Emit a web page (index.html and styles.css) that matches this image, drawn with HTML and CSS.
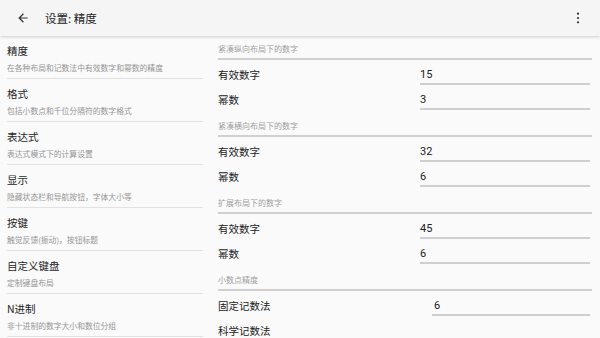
FILE: index.html
```html
<!DOCTYPE html>
<html lang="zh">
<head>
<meta charset="utf-8">
<link rel="stylesheet" href="styles.css">
</head>
<body>
<header class="appbar">
  <svg class="icon back" viewBox="0 0 24 24" width="14" height="14"><path d="M20 11H7.83l5.59-5.59L12 4l-8 8 8 8 1.41-1.41L7.83 13H20v-2z" fill="#333"/></svg>
  <h1 class="title">设置: 精度</h1>
  <svg class="icon more" viewBox="0 0 4 14" width="4" height="12"><circle cx="2" cy="2" r="1.3" fill="#333"/><circle cx="2" cy="7" r="1.3" fill="#333"/><circle cx="2" cy="12" r="1.3" fill="#333"/></svg>
</header>
<main class="content">
  <nav class="menu">
    <div class="item"><div class="item-title">精度</div><div class="item-sub">在各种布局和记数法中有效数字和幂数的精度</div></div>
    <div class="item"><div class="item-title">格式</div><div class="item-sub">包括小数点和千位分隔符的数字格式</div></div>
    <div class="item"><div class="item-title">表达式</div><div class="item-sub">表达式模式下的计算设置</div></div>
    <div class="item"><div class="item-title">显示</div><div class="item-sub">隐藏状态栏和导航按钮，字体大小等</div></div>
    <div class="item"><div class="item-title">按键</div><div class="item-sub">触觉反馈(振动)，按钮标题</div></div>
    <div class="item"><div class="item-title">自定义键盘</div><div class="item-sub">定制键盘布局</div></div>
    <div class="item"><div class="item-title">N进制</div><div class="item-sub">非十进制的数字大小和数位分组</div></div>
  </nav>
  <section class="detail">
    <div class="group">
      <div class="group-head">紧凑纵向布局下的数字</div>
      <div class="row"><span class="label">有效数字</span><span class="value">15</span></div>
      <div class="row"><span class="label">幂数</span><span class="value">3</span></div>
    </div>
    <div class="group">
      <div class="group-head">紧凑横向布局下的数字</div>
      <div class="row"><span class="label">有效数字</span><span class="value">32</span></div>
      <div class="row"><span class="label">幂数</span><span class="value">6</span></div>
    </div>
    <div class="group">
      <div class="group-head">扩展布局下的数字</div>
      <div class="row"><span class="label">有效数字</span><span class="value">45</span></div>
      <div class="row"><span class="label">幂数</span><span class="value">6</span></div>
    </div>
    <div class="group">
      <div class="group-head">小数点精度</div>
      <div class="row wide"><span class="label">固定记数法</span><span class="value">6</span></div>
      <div class="row wide"><span class="label">科学记数法</span><span class="value"></span></div>
    </div>
  </section>
</main>
</body>
</html>
```

FILE: styles.css
```css
* { box-sizing: border-box; margin: 0; padding: 0; }
html, body { width: 600px; height: 338px; overflow: hidden; }
body {
  background: #fafafa;
  font-family: "Noto Sans CJK SC", "Noto Sans", Roboto, sans-serif;
  color: #212121;
}
.appbar {
  height: 36px;
  background: #f5f5f5;
  display: flex;
  align-items: center;
  padding: 0 20px 0 16px;
  box-shadow: 0 1px 3px rgba(0,0,0,0.18);
  position: relative;
  z-index: 1;
}
.icon { display: block; flex: none; }
.back { margin-right: 15px; }
.title { font-size: 11.5px; font-weight: 400; flex: 1; line-height: 16px; color: #222; }
.content { display: flex; height: 302px; overflow: hidden; }
.menu { width: 210px; flex: none; padding: 0 7px; }
.item { padding: 7px 0 3px; border-bottom: 1px solid #e2e2e2; height: 43px; }
.item-title { font-size: 10.5px; line-height: 16px; color: #1e1e1e; }
.item-sub { font-size: 7.8px; line-height: 12px; margin-top: 3px; color: #959595; }
.detail { flex: 1; padding: 0 8px 0 8px; }
.group { padding-bottom: 3px; }
.group-head {
  font-size: 8px; line-height: 12px; color: #9e9e9e;
  padding: 7px 0 3px;
  border-bottom: 2px solid #d0d0d0;
}
.row { display: flex; align-items: flex-end; padding-top: 7px; }
.label { width: 202px; font-size: 10.5px; line-height: 16px; padding-bottom: 2px; color: #222; }
.value {
  flex: 1; font-family: Roboto, "Noto Sans", sans-serif;
  font-size: 11px; line-height: 16px; color: #222;
  border-bottom: 2px solid #cfcfcf;
  margin-right: 2px;
}
.row.wide .label { width: 214px; }
.row.wide .value { padding-left: 2px; }
```
